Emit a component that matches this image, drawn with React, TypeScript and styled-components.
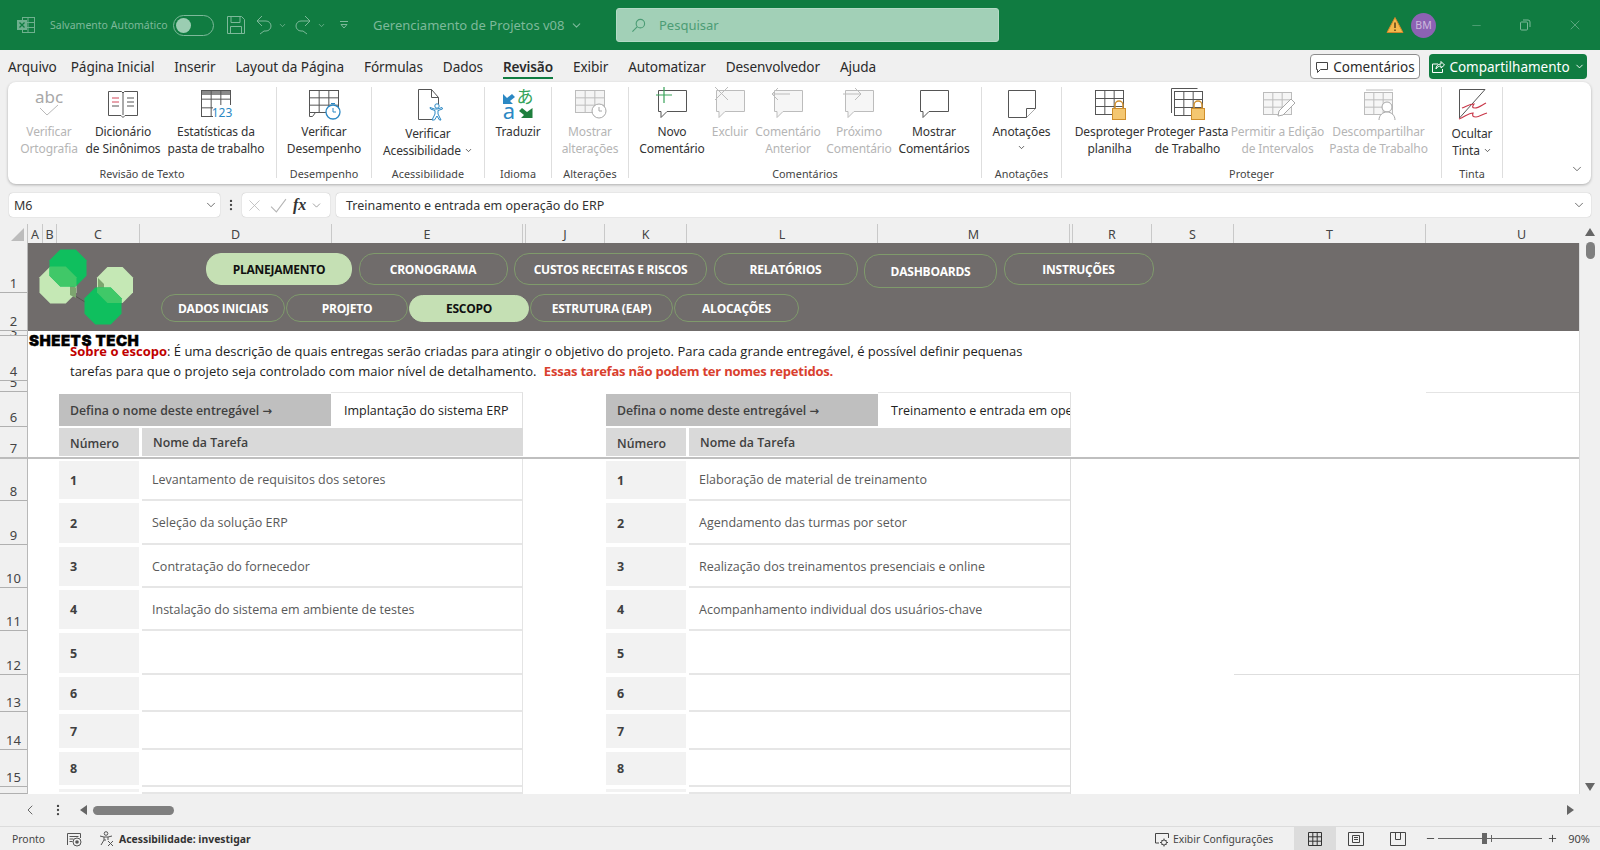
import React from "react";
import styled, { createGlobalStyle } from "styled-components";
import { ChevronDown, ChevronLeft, Minus, Plus, X, MoreVertical } from "lucide-react";

const UI = `"Noto Sans", "Open Sans", "Liberation Sans", sans-serif`;
const CELL = `"Open Sans", "Noto Sans", "Liberation Sans", sans-serif`;

const Global = createGlobalStyle`
  html, body { margin: 0; padding: 0; background: #f0f0f0; }
  * { box-sizing: border-box; }
`;

const GRAY = "#555555";
const OFF = "#bcbcbc";
const BLUE = "#2b88c4";

function Grid({ x, y, w, h, c, fill = "none" }: { x: number; y: number; w: number; h: number; c: string; fill?: string }) {
  return (
    <g fill="none" stroke={c} strokeWidth="1">
      <rect x={x + 0.5} y={y + 0.5} width={w} height={h} fill={fill} />
      <path d={`M${x + 0.5} ${y + h / 3 + 0.5}h${w}M${x + 0.5} ${y + (2 * h) / 3 + 0.5}h${w}M${x + w / 3 + 0.5} ${y + 0.5}v${h}M${x + (2 * w) / 3 + 0.5} ${y + 0.5}v${h}`} />
    </g>
  );
}

function Lock({ x, y }: { x: number; y: number }) {
  return (
    <g>
      <path d={`M${x + 3} ${y + 8}v-3a4 4 0 0 1 8 0v3`} fill="none" stroke="#d08f2c" strokeWidth="1.5" />
      <rect x={x + 0.5} y={y + 8.5} width={13} height={11} fill="#f4c771" stroke="#d08f2c" />
    </g>
  );
}

function Bubble({ c = GRAY, fill = "#fff" }: { c?: string; fill?: string }) {
  return <path d="M6.5 3.5h28v21H15l-6 6v-6H6.5z" fill={fill} stroke={c} />;
}

const RibbonIcons: Record<string, React.ReactNode> = {
  spell: (
    <>
      <text x="20" y="16" textAnchor="middle" fontFamily={UI} fontSize="17" fill="#a8a8a8">abc</text>
      <path d="M11 21l7 7 11-10" fill="none" stroke="#b9b9b9" />
    </>
  ),
  book: (
    <>
      <path d="M5.5 4.5h13l1.5 1.5 1.5-1.5h13v24H22l-2 2-2-2H5.500z" fill="#fff" stroke={GRAY} />
      <path d="M20 6v22" stroke={GRAY} />
      <path d="M9 11h7M9 15h7" stroke="#d2475b" />
      <path d="M9 19h7M24 11h7M24 15h7M24 19h7" stroke={GRAY} />
    </>
  ),
  stats: (
    <>
      <rect x="6" y="3" width="28" height="5" fill="#8a8a8a" />
      <Grid x={5} y={3} w={29} h={26} c={GRAY} />
      <rect x="17" y="18" width="20" height="13" fill="#fff" />
      <text x="26" y="30" textAnchor="middle" fontFamily={UI} fontSize="12" fill={BLUE}>123</text>
    </>
  ),
  perf: (
    <>
      <Grid x={5} y={3} w={29} h={22} c={GRAY} />
      <path d="M5.500 25.500h6l-3 4h-3z" fill="#fff" stroke={GRAY} />
      <circle cx="29" cy="25" r="7" fill="#fff" stroke={BLUE} strokeWidth="1.300" />
      <path d="M29 21v4h3M27 16.500h4" fill="none" stroke={BLUE} />
    </>
  ),
  access: (
    <>
      <path d="M10.500 32.500V2.500h13l7 8v8M24 32.500H10.500M23.500 2.500v8h7" fill="#fff" stroke={GRAY} />
      <circle cx="29" cy="19" r="2.200" fill="#fff" stroke={BLUE} />
      <path d="M22.500 22l4.500 1.500v3.500l-3 6h2.500l2.500-4 2.500 4H33l-3-6v-3.500l4.500-1.500-.5-1.500-4.500 1.500h-3l-4.500-1.500z" fill="#fff" stroke={BLUE} />
    </>
  ),
  translate: (
    <>
      <path d="M5 7v10h10l-3-3 5-4-3-3-5 4z" fill={BLUE} />
      <text x="11" y="32" textAnchor="middle" fontFamily={UI} fontSize="22" fill={BLUE}>a</text>
      <text x="27" y="16" textAnchor="middle" fontFamily={`"Noto Sans CJK JP", sans-serif`} fontSize="17" fill="#35a35a">あ</text>
      <path d="M34.500 31H23l3-3-5-4 3-3 5 4 5.500-4z" fill="#1f7f3d" />
    </>
  ),
  changes: (
    <>
      <Grid x={5} y={3} w={29} h={22} c={OFF} fill="#f4f4f4" />
      <circle cx="29" cy="24" r="7" fill="#fff" stroke="#a8a8a8" />
      <path d="M29 20v4h3" fill="none" stroke="#a8a8a8" />
    </>
  ),
  add: (
    <>
      <Bubble />
      <path d="M12 0v16M4 8h16" stroke="#3aa35a" strokeWidth="1.200" />
    </>
  ),
  del: (
    <>
      <Bubble c={OFF} fill="#f6f6f6" />
      <path d="M5 0l13 13M18 0L5 13" stroke={OFF} />
    </>
  ),
  prev: (
    <>
      <Bubble c={OFF} fill="#f6f6f6" />
      <path d="M22 7H4M10 1L4 7l6 6" fill="none" stroke={OFF} />
    </>
  ),
  next: (
    <>
      <Bubble c={OFF} fill="#f6f6f6" />
      <path d="M4 7h18M16 1l6 6-6 6" fill="none" stroke={OFF} />
    </>
  ),
  show: <Bubble />,
  note: (
    <>
      <path d="M6.500 3.500h27v18l-9 9h-18z" fill="#fff" stroke={GRAY} />
      <path d="M24.500 30.500v-9h9" fill="#fff" stroke={GRAY} />
    </>
  ),
  unprotect: (
    <>
      <Grid x={5} y={3} w={28} h={24} c={GRAY} />
      <Lock x={22} y={13} />
    </>
  ),
  protect: (
    <>
      <path d="M3.500 26V1.500h26" fill="none" stroke={GRAY} />
      <Grid x={6} y={4} w={28} h={24} c={GRAY} />
      <Lock x={23} y={13} />
    </>
  ),
  edit: (
    <>
      <Grid x={5} y={5} w={28} h={22} c={OFF} fill="#f6f6f6" />
      <path d="M20 29l1-5 12-12 4 4-12 12z" fill="#fff" stroke="#a8a8a8" />
    </>
  ),
  share: (
    <>
      <path d="M7 3h27" stroke={OFF} />
      <Grid x={5} y={5} w={28} h={22} c={OFF} fill="#f6f6f6" />
      <circle cx="28" cy="20" r="5" fill="#fff" stroke="#a8a8a8" />
      <path d="M20 33c0-5 4-8 8-8s8 3 8 8" fill="#fff" stroke="#a8a8a8" />
    </>
  ),
  ink: (
    <>
      <path d="M7.500 31V2.500H33L7.500 31z" fill="#fff" stroke={GRAY} />
      <path d="M10 21c5-2 8-4 12-4-2 3-2 4 1 4 3 0 7-3 11-5M7 32c6-2 9-6 14-6-1 3 0 4 3 4s7-3 11-4" fill="none" stroke="#c9384a" strokeWidth="1.200" />
    </>
  ),
};

type Btn = { w: number; text: string; icon: string; off?: boolean; menu?: boolean; low?: boolean };
type Group = { label: string; w: number; last?: boolean; items: Btn[] };

const GROUPS: Group[] = [
  {
    label: "Revisão de Texto",
    w: 269,
    items: [
      { w: 62, text: "Verificar\nOrtografia", icon: "spell", off: true },
      { w: 82, text: "Dicionário\nde Sinônimos", icon: "book" },
      { w: 100, text: "Estatísticas da\npasta de trabalho", icon: "stats" },
    ],
  },
  { label: "Desempenho", w: 95, items: [{ w: 80, text: "Verificar\nDesempenho", icon: "perf" }] },
  { label: "Acessibilidade", w: 113, items: [{ w: 100, text: "Verificar\nAcessibilidade", icon: "access", menu: true, low: true }] },
  { label: "Idioma", w: 67, items: [{ w: 50, text: "Traduzir", icon: "translate" }] },
  { label: "Alterações", w: 77, items: [{ w: 62, text: "Mostrar\nalterações", icon: "changes", off: true }] },
  {
    label: "Comentários",
    w: 353,
    items: [
      { w: 68, text: "Novo\nComentário", icon: "add" },
      { w: 44, text: "Excluir", icon: "del", off: true },
      { w: 68, text: "Comentário\nAnterior", icon: "prev", off: true },
      { w: 70, text: "Próximo\nComentário", icon: "next", off: true },
      { w: 76, text: "Mostrar\nComentários", icon: "show" },
    ],
  },
  { label: "Anotações", w: 80, items: [{ w: 70, text: "Anotações", icon: "note", menu: true }] },
  {
    label: "Proteger",
    w: 380,
    items: [
      { w: 72, text: "Desproteger\nplanilha", icon: "unprotect" },
      { w: 80, text: "Proteger Pasta\nde Trabalho", icon: "protect" },
      { w: 96, text: "Permitir a Edição\nde Intervalos", icon: "edit", off: true },
      { w: 102, text: "Descompartilhar\nPasta de Trabalho", icon: "share", off: true },
    ],
  },
  { label: "Tinta", w: 61, items: [{ w: 50, text: "Ocultar\nTinta", icon: "ink", menu: true, low: true }] },
];

const TABS = ["Arquivo", "Página Inicial", "Inserir", "Layout da Página", "Fórmulas", "Dados", "Revisão", "Exibir", "Automatizar", "Desenvolvedor", "Ajuda"];

const COLS: [string, number][] = [
  ["A", 15], ["B", 14], ["C", 83], ["D", 192], ["E", 191], ["", 3], ["J", 79], ["K", 82], ["L", 191], ["M", 192], ["", 3], ["R", 79], ["S", 82], ["T", 192], ["U", 192],
];

const ROW_HEADS: [number, number][] = [
  [1, 50], [2, 38], [3, 5], [4, 45], [5, 11], [6, 35], [7, 32], [8, 42], [9, 44], [10, 43], [11, 43], [12, 44], [13, 37], [14, 38], [15, 37], [16, 7],
];

const TASK_ROWS = ROW_HEADS.slice(7);

const LEFT = ["Levantamento de requisitos dos setores", "Seleção da solução ERP", "Contratação do fornecedor", "Instalação do sistema em ambiente de testes"];
const RIGHT = ["Elaboração de material de treinamento", "Agendamento das turmas por setor", "Realização dos treinamentos presenciais e online", "Acompanhamento individual dos usuários-chave"];

const NAV_TOP = [
  { t: "PLANEJAMENTO", w: 146, h: 32, on: true },
  { t: "CRONOGRAMA", w: 149, h: 32 },
  { t: "CUSTOS RECEITAS E RISCOS", w: 193, h: 32 },
  { t: "RELATÓRIOS", w: 144, h: 32 },
  { t: "DASHBOARDS", w: 133, h: 34, drop: true },
  { t: "INSTRUÇÕES", w: 150, h: 32 },
];
const NAV_SUB = [
  { t: "DADOS INICIAIS", w: 124, h: 28 },
  { t: "PROJETO", w: 122, h: 28 },
  { t: "ESCOPO", w: 120, h: 27, on: true },
  { t: "ESTRUTURA (EAP)", w: 143, h: 28 },
  { t: "ALOCAÇÕES", w: 125, h: 28 },
];

function Logo() {
  const oct = (cx: number, cy: number, r: number) => {
    const k = r * 0.42;
    return `${cx - k},${cy - r} ${cx + k},${cy - r} ${cx + r},${cy - k} ${cx + r},${cy + k} ${cx + k},${cy + r} ${cx - k},${cy + r} ${cx - r},${cy + k} ${cx - r},${cy - k}`;
  };
  const a = oct(30, 20, 18.500);
  const b = oct(20, 37, 18.500);
  const c = oct(77, 37, 18);
  const d = oct(65, 58, 18.500);
  return (
    <LogoMark viewBox="0 0 100 80" width="100" height="80">
      <defs>
        <clipPath id="clip-a"><polygon points={a} /></clipPath>
        <clipPath id="clip-d"><polygon points={d} /></clipPath>
      </defs>
      <path d="M34 46L60 62" stroke="#55524f" strokeWidth="1" />
      <polygon points={b} fill="#c5e8b5" />
      <polygon points={c} fill="#c5e8b5" />
      <polygon points="32,32 38,40 38,50 32,47" fill="#7da56f" />
      <polygon points="60,30 66,36 66,46 60,42" fill="#7da56f" />
      <polygon points={a} fill="#0fbf5e" />
      <polygon points={d} fill="#0fbf5e" />
      <polygon points={b} fill="#40c868" clipPath="url(#clip-a)" />
      <polygon points={c} fill="#40c868" clipPath="url(#clip-d)" />
    </LogoMark>
  );
}

function Nav({ items }: { items: { t: string; w: number; h: number; on?: boolean; drop?: boolean }[] }) {
  return (
    <>
      {items.map((p) => (
        <Pill key={p.t} $w={p.w} $h={p.h} $on={p.on} $drop={p.drop}>{p.t}</Pill>
      ))}
    </>
  );
}

function NameHeader({ value }: { value: string }) {
  return (
    <NameHead>
      <NameLabel>Defina o nome deste entregável <LabelArrow>→</LabelArrow></NameLabel>
      <NameValue>{value}</NameValue>
    </NameHead>
  );
}

function TaskHeader() {
  return (
    <TaskHead>
      <HeadNum>Número</HeadNum>
      <HeadName>Nome da Tarefa</HeadName>
    </TaskHead>
  );
}

export default function App() {
  return (
    <Page>
      <Global />
      <TitleBar>
        <ExcelMark viewBox="0 0 20 20" width="20" height="20">
          <rect x="6.500" y="2.500" width="12" height="15" fill="none" stroke="#6fb08e" />
          <path d="M12 2.500v15M6.500 7.500h12M6.500 12.500h12" stroke="#6fb08e" />
          <rect x="1" y="5" width="10" height="10" fill="#6fb08e" />
          <path d="M3.500 7.500l5 5M8.500 7.500l-5 5" stroke="#107c41" strokeWidth="1.300" />
        </ExcelMark>
        <AutoSave>Salvamento Automático</AutoSave>
        <Toggle><ToggleKnob /></Toggle>
        <QatIcon viewBox="0 0 20 20" width="20" height="20">
          <path d="M1.500 1.500h14l3 3v14h-17zM5 1.500v6h9v-6M4.500 18.500v-7h11v7" />
        </QatIcon>
        <QatIcon viewBox="0 0 20 20" width="20" height="20" $gap={8}>
          <path d="M8 1L3 6l5 5M3 6h9a5 5 0 0 1 0 10h-2l-4 3" />
        </QatIcon>
        <QatChevron size={9} />
        <QatIcon viewBox="0 0 20 20" width="20" height="20" $gap={6}>
          <path d="M12 1l5 5-5 5M17 6H8a5 5 0 0 0 0 10h2l4 3" />
        </QatIcon>
        <QatChevron size={9} />
        <QatIcon viewBox="0 0 10 10" width="10" height="10" $gap={13}>
          <path d="M1 1.500h8M2 4.500h6L5 8z" />
        </QatIcon>
        <DocTitle>Gerenciamento de Projetos v08 <ChevronDown size={13} /></DocTitle>
        <SearchBox>
          <svg viewBox="0 0 16 16" width="15" height="15" fill="none" stroke="#4c9c75" strokeWidth="1.200">
            <circle cx="10" cy="6" r="4.500" />
            <path d="M6.500 9.500L1.500 14.500" />
          </svg>
          <SearchHint>Pesquisar</SearchHint>
        </SearchBox>
        <WindowSide>
          <svg viewBox="0 0 18 18" width="18" height="18">
            <path d="M9 1.500l8 15H1z" fill="#f2b84b" stroke="#d1862a" />
            <path d="M9 6.500v5.500M9 13.500v1.500" stroke="#4d3a12" strokeWidth="1.400" />
          </svg>
          <Avatar>BM</Avatar>
          <WinBtn $gap={34}><Minus size={13} strokeWidth={1} /></WinBtn>
          <WinBtn $gap={36}>
            <svg viewBox="0 0 12 12" width="12" height="12" fill="none" stroke="currentColor">
              <rect x="1.500" y="3" width="7" height="8" rx="1" />
              <path d="M4 1h5a2 2 0 0 1 2 2v5" />
            </svg>
          </WinBtn>
          <WinBtn $gap={36}><X size={16} strokeWidth={1} /></WinBtn>
        </WindowSide>
      </TitleBar>

      <TabBar>
        {TABS.map((t) => (
          <Tab key={t} $on={t === "Revisão"} $tight={t === "Arquivo"}>{t}</Tab>
        ))}
        <TabActions>
          <CommentsBtn>
            <svg viewBox="0 0 14 14" width="14" height="14" fill="none" stroke="#444">
              <path d="M1.500 2.500h11v7h-7l-3 3v-3h-1z" />
            </svg>
            Comentários
          </CommentsBtn>
          <ShareBtn>
            <svg viewBox="0 0 14 14" width="14" height="14" fill="none" stroke="#fff">
              <path d="M7 4H1.500v8.500h10V9M5 9c0-3 2-5 5-5V1.500L13.500 5 10 8V6C8 6 6 7 5 9z" />
            </svg>
            Compartilhamento
            <ChevronDown size={11} />
          </ShareBtn>
        </TabActions>
      </TabBar>

      <Ribbon>
        {GROUPS.map((g) => (
          <RibbonGroup key={g.label} $w={g.w}>
            <GroupItems>
              {g.items.map((b) => (
                <RibbonBtn key={b.text} $w={b.w} $off={b.off}>
                  <IconSlot viewBox="0 0 40 34" width="40" height="34">{RibbonIcons[b.icon]}</IconSlot>
                  <BtnText $low={b.low}>
                    {b.text}
                    {b.menu && (b.icon === "note" ? <MenuBelow><ChevronDown size={9} /></MenuBelow> : <MenuInline size={9} />)}
                  </BtnText>
                </RibbonBtn>
              ))}
            </GroupItems>
            <GroupLabel>{g.label}</GroupLabel>
          </RibbonGroup>
        ))}
        <RibbonCollapse><ChevronDown size={14} strokeWidth={1.200} /></RibbonCollapse>
      </Ribbon>

      <FormulaBar>
        <NameBox>M6 <ChevronDown size={14} strokeWidth={1.200} /></NameBox>
        <BarDots><MoreVertical size={14} /></BarDots>
        <FuncBox>
          <X size={19} strokeWidth={1} />
          <svg viewBox="0 0 16 16" width="17" height="17" fill="none" stroke="#b5b5b5"><path d="M1 9l5 5 9-12" /></svg>
          <Fx>fx</Fx>
          <FuncChevron size={13} strokeWidth={1} />
        </FuncBox>
        <FormulaInput>
          Treinamento e entrada em operação do ERP
          <ChevronDown size={14} strokeWidth={1.200} />
        </FormulaInput>
      </FormulaBar>

      <SheetFrame>
        <SheetMain>
          <ColHeaders>
            <Corner><CornerMark /></Corner>
            {COLS.map(([c, w], i) => (
              <ColHead key={`${c}${i}`} $w={w}>{c}</ColHead>
            ))}
          </ColHeaders>
          <SheetBody>
            <RowHeaders>
              {ROW_HEADS.map(([n, h]) => (
                <RowHead key={n} $h={h} $freeze={n === 7} $tight={n === 3}>{n === 16 ? "" : n}</RowHead>
              ))}
            </RowHeaders>
            <Cells>
              <Banner>
                <Logo />
                <NavTop><Nav items={NAV_TOP} /></NavTop>
                <NavSub><Nav items={NAV_SUB} /></NavSub>
              </Banner>
              <BrandName>SHEETS TECH</BrandName>
              <About>
                <AboutLead>Sobre o escopo</AboutLead>: É uma descrição de quais entregas serão criadas para atingir o objetivo do projeto. Para cada grande entregável, é possível definir pequenas
                <br />
                tarefas para que o projeto seja controlado com maior nível de detalhamento. <AboutWarn>Essas tarefas não podem ter nomes repetidos.</AboutWarn>
              </About>

              <SheetRow $h={35}>
                <span />
                <NameHeader value="Implantação do sistema ERP" />
                <span />
                <NameHeader value="Treinamento e entrada em operação do ERP" />
                <Filler><FillerRule $w={153} $top /></Filler>
              </SheetRow>
              <SheetRow $h={32} $freeze>
                <span />
                <TaskHeader />
                <span />
                <TaskHeader />
                <span />
              </SheetRow>
              {TASK_ROWS.map(([n, h], i) => (
                <SheetRow key={n} $h={h}>
                  <span />
                  <TaskRow>
                    <NumCell>{n === 16 ? "" : i + 1}</NumCell>
                    <NameCell>{LEFT[i]}</NameCell>
                  </TaskRow>
                  <span />
                  <TaskRow $edge>
                    <NumCell>{n === 16 ? "" : i + 1}</NumCell>
                    <NameCell>{RIGHT[i]}</NameCell>
                  </TaskRow>
                  <Filler>{n === 12 && <FillerRule $w={345} />}</Filler>
                </SheetRow>
              ))}
            </Cells>
          </SheetBody>
        </SheetMain>
        <VScroll>
          <ArrowUp />
          <VThumb />
          <ArrowDown />
        </VScroll>
      </SheetFrame>

      <HScroll>
        <ChevronLeft size={16} strokeWidth={1.200} color="#444" />
        <HDots><MoreVertical size={14} color="#444" /></HDots>
        <ArrowLeft />
        <HThumb />
        <ArrowRight />
      </HScroll>

      <StatusBar>
        <StatusText>Pronto</StatusText>
        <StatusIcon viewBox="0 0 16 16" width="16" height="16" $gap={22}>
          <path d="M1.500 14V2.500h13V7M3.500 5.500h9M3.500 8h4M3.500 10.500h3" fill="none" stroke="#555" />
          <circle cx="11" cy="11" r="4" fill="none" stroke="#555" />
          <circle cx="11" cy="11" r="1.800" fill="#555" />
        </StatusIcon>
        <StatusIcon viewBox="0 0 16 16" width="16" height="16" $gap={17}>
          <circle cx="7" cy="2.500" r="1.800" fill="none" stroke="#555" />
          <path d="M1 5l4 1h4l4-1M5 6v3l-3 5M9 6v3M5 9h2" fill="none" stroke="#555" />
          <path d="M9 10l5 5M14 10l-5 5" stroke="#555" />
        </StatusIcon>
        <StatusStrong>Acessibilidade: investigar</StatusStrong>
        <StatusRight>
          <DisplayCfg>
            <svg viewBox="0 0 16 16" width="16" height="16" fill="none" stroke="#444">
              <path d="M5 12H1.500V2.500h13V7" />
              <circle cx="10" cy="11.500" r="2.500" />
              <path d="M10 7.500v1.500M10 14v1.500M6 11.500h1.500M12.500 11.500H14M7.500 9l1 1M11.500 13l1 1M12.500 9l-1 1M8.500 13l-1 1" />
            </svg>
            Exibir Configurações
          </DisplayCfg>
          <ViewBtn $w={42} $on>
            <svg viewBox="0 0 14 14" width="14" height="14" fill="none" stroke="#333">
              <path d="M.5.500h13v13H.5zM.5 4.800h13M.5 9.200h13M4.800.500v13M9.200.500v13" />
            </svg>
          </ViewBtn>
          <ViewBtn $w={40}>
            <svg viewBox="0 0 16 14" width="16" height="14" fill="none" stroke="#444">
              <path d="M.5.500h15v13H.5zM4.500 3.500h7v7h-7zM6 5.500h4M6 7.500h4" />
            </svg>
          </ViewBtn>
          <ViewBtn $w={44}>
            <svg viewBox="0 0 16 14" width="16" height="14" fill="none" stroke="#444">
              <path d="M.5.500h15v13H.5zM5.500.500v7h5v-7" />
            </svg>
          </ViewBtn>
          <ZoomMinus size={11} color="#444" />
          <ZoomTrack><ZoomThumb /><ZoomTick /></ZoomTrack>
          <Plus size={11} color="#444" />
          <ZoomValue>90%</ZoomValue>
        </StatusRight>
      </StatusBar>
    </Page>
  );
}

const Page = styled.div`
  width: 1600px;
  height: 850px;
  overflow: hidden;
  display: flex;
  flex-direction: column;
  background: #f0f0f0;
  font-family: ${UI};
  color: #333;
`;

const TitleBar = styled.div`
  height: 50px;
  flex: none;
  background: #107c41;
  display: flex;
  align-items: center;
  padding-left: 16px;
  color: #7db99a;
`;

const ExcelMark = styled.svg`
  flex: none;
`;

const AutoSave = styled.span`
  margin-left: 14px;
  width: 123px;
  font-size: 10.500px;
  white-space: nowrap;
  color: #7db99a;
`;

const Toggle = styled.div`
  width: 41px;
  height: 21px;
  border: 1px solid #7db99a;
  border-radius: 11px;
  padding: 2px;
`;

const ToggleKnob = styled.div`
  width: 15px;
  height: 15px;
  border-radius: 50%;
  background: #9bcdb2;
`;

const QatIcon = styled.svg<{ $gap?: number }>`
  flex: none;
  margin-left: ${(p) => p.$gap ?? 12}px;
  fill: none;
  stroke: #7db99a;
  stroke-width: 1;
`;

const QatChevron = styled(ChevronDown)`
  margin-left: 4px;
  flex: none;
`;

const DocTitle = styled.div`
  margin-left: 24px;
  width: 243px;
  font-size: 13px;
  white-space: nowrap;
  display: flex;
  align-items: center;
  gap: 5px;
`;

const SearchBox = styled.div`
  width: 383px;
  height: 34px;
  background: #a2d0b7;
  border-radius: 3px;
  border: 1px solid #b4dac5;
  display: flex;
  align-items: center;
  padding-left: 14px;
  gap: 13px;
`;

const SearchHint = styled.span`
  font-size: 13px;
  color: #4c9c75;
`;

const WindowSide = styled.div`
  margin-left: auto;
  display: flex;
  align-items: center;
  padding-right: 17px;
`;

const Avatar = styled.div`
  width: 25px;
  height: 25px;
  margin-left: 7px;
  border-radius: 50%;
  background: #8c62b3;
  color: #cdb9de;
  font-size: 10.500px;
  display: flex;
  align-items: center;
  justify-content: center;
`;

const WinBtn = styled.div<{ $gap: number }>`
  margin-left: ${(p) => p.$gap}px;
  display: flex;
  color: #7db99a;
`;

const TabBar = styled.div`
  height: 32px;
  flex: none;
  display: flex;
  align-items: center;
  gap: 20px;
  padding: 1px 0 0 8px;
`;

const Tab = styled.div<{ $on?: boolean; $tight?: boolean }>`
  position: relative;
  margin-right: ${(p) => (p.$tight ? -6 : 0)}px;
  font-size: 13.600px;
  line-height: 24px;
  letter-spacing: -0.1px;
  white-space: nowrap;
  color: #2b2b2b;
  font-weight: ${(p) => (p.$on ? 600 : 400)};
  ${(p) =>
    p.$on &&
    `&::after { content: ""; position: absolute; left: 0; right: 0; bottom: 0; height: 2px; background: #107c41; }`}
`;

const TabActions = styled.div`
  margin-left: auto;
  display: flex;
  gap: 9px;
  padding-right: 13px;
`;

const CommentsBtn = styled.div`
  width: 110px;
  height: 25px;
  border: 1px solid #8d8d8d;
  border-radius: 4px;
  background: #fff;
  display: flex;
  align-items: center;
  justify-content: center;
  gap: 4px;
  font-size: 13.500px;
  color: #2b2b2b;
`;

const ShareBtn = styled.div`
  width: 158px;
  height: 25px;
  border-radius: 4px;
  background: #107c41;
  color: #fff;
  display: flex;
  align-items: center;
  justify-content: center;
  gap: 4px;
  font-size: 13.500px;
`;

const Ribbon = styled.div`
  position: relative;
  height: 102px;
  flex: none;
  margin: 0 9px 0 8px;
  padding: 5px 0 6px;
  background: #fff;
  border-radius: 8px;
  box-shadow: 0 1px 3px rgba(0, 0, 0, 0.28);
  display: flex;
`;

const RibbonGroup = styled.div<{ $w: number }>`
  width: ${(p) => p.$w}px;
  flex: none;
  display: flex;
  flex-direction: column;
  border-right: 1px solid #dedede;
`;

const GroupItems = styled.div`
  flex: 1;
  display: flex;
  justify-content: center;
  gap: 2px;
`;

const RibbonBtn = styled.div<{ $w: number; $off?: boolean }>`
  width: ${(p) => p.$w}px;
  flex: none;
  display: flex;
  flex-direction: column;
  align-items: center;
  color: ${(p) => (p.$off ? "#b5b5b5" : "#333")};
`;

const IconSlot = styled.svg`
  flex: none;
  overflow: visible;
`;

const BtnText = styled.div<{ $low?: boolean }>`
  margin-top: ${(p) => (p.$low ? 4 : 2)}px;
  font-size: 12px;
  line-height: 17px;
  letter-spacing: -0.12px;
  text-align: center;
  white-space: pre;
`;

const MenuInline = styled(ChevronDown)`
  margin-left: 3px;
  vertical-align: 0;
`;

const MenuBelow = styled.div`
  display: flex;
  justify-content: center;
  padding-top: 3px;
`;

const GroupLabel = styled.div`
  height: 12px;
  margin-bottom: -2px;
  font-size: 10.800px;
  line-height: 12px;
  letter-spacing: 0.05px;
  text-align: center;
  color: #444;
`;

const RibbonCollapse = styled.div`
  position: absolute;
  right: 7px;
  bottom: 8px;
  display: flex;
  color: #333;
`;

const FormulaBar = styled.div`
  height: 24px;
  flex: none;
  margin: 9px 9px 7px 9px;
  display: flex;
  align-items: stretch;
`;

const BarBox = styled.div`
  background: #fff;
  border-radius: 4px;
  box-shadow: 0 0 1px rgba(0, 0, 0, 0.35);
  display: flex;
  align-items: center;
  font-size: 12.500px;
  color: #333;
`;

const NameBox = styled(BarBox)`
  width: 211px;
  padding: 0 2px 0 5px;
  justify-content: space-between;
`;

const BarDots = styled.div`
  width: 22px;
  display: flex;
  align-items: center;
  justify-content: center;
  color: #444;
`;

const FuncBox = styled(BarBox)`
  width: 88px;
  margin-right: 6px;
  padding: 0 3px;
  gap: 6px;
  color: #b5b5b5;
`;

const FuncChevron = styled(ChevronDown)`
  color: #555;
  margin-left: -2px;
  flex: none;
`;

const Fx = styled.span`
  font-family: "Liberation Serif", serif;
  font-style: italic;
  font-weight: 700;
  font-size: 16px;
  color: #333;
`;

const FormulaInput = styled(BarBox)`
  flex: 1;
  padding: 0 5px 0 10px;
  justify-content: space-between;
  color: #333;
`;

const SheetFrame = styled.div`
  height: 570px;
  flex: none;
  display: flex;
`;

const SheetMain = styled.div`
  flex: 1;
  min-width: 0;
  display: flex;
  flex-direction: column;
`;

const ColHeaders = styled.div`
  height: 19px;
  flex: none;
  display: flex;
  overflow: hidden;
`;

const Corner = styled.div`
  position: relative;
  width: 28px;
  flex: none;
  border-right: 1px solid #c4c4c4;
`;

const CornerMark = styled.div`
  position: absolute;
  right: 3px;
  bottom: 2px;
  width: 0;
  height: 0;
  border-left: 13px solid transparent;
  border-bottom: 13px solid #bcbcbc;
`;

const ColHead = styled.div<{ $w: number }>`
  width: ${(p) => p.$w}px;
  flex: none;
  border-right: 1px solid #c9c9c9;
  font-size: 12.500px;
  line-height: 21px;
  text-align: center;
  color: #444;
`;

const SheetBody = styled.div`
  flex: 1;
  min-height: 0;
  display: flex;
`;

const RowHeaders = styled.div`
  width: 28px;
  flex: none;
  overflow: hidden;
  border-right: 1px solid #b8b8b8;
`;

const RowHead = styled.div<{ $h: number; $freeze?: boolean; $tight?: boolean }>`
  height: ${(p) => p.$h}px;
  display: flex;
  align-items: flex-end;
  justify-content: center;
  overflow: hidden;
  border-bottom: ${(p) => (p.$freeze ? "2px solid #bcbcbc" : "1px solid #b0b0b0")};
  font-size: 13px;
  line-height: ${(p) => (p.$tight ? 8 : 17)}px;
  color: #444;
`;

const Cells = styled.div`
  position: relative;
  flex: 1;
  min-width: 0;
  overflow: hidden;
  background: #fff;
  border-right: 1px solid #dcdcdc;
  font-family: ${CELL};
`;

const Banner = styled.div`
  position: relative;
  height: 88px;
  background: #706c6b;
  padding-top: 10px;
  display: flex;
  flex-direction: column;
`;

const LogoMark = styled.svg`
  position: absolute;
  left: 10px;
  top: 5px;
`;

const NavTop = styled.div`
  height: 41px;
  padding-left: 178px;
  display: flex;
  align-items: flex-start;
  gap: 6.500px;
`;

const NavSub = styled.div`
  padding-left: 133px;
  display: flex;
  align-items: center;
  gap: 1px;
`;

const Pill = styled.div<{ $w: number; $h: number; $on?: boolean; $drop?: boolean }>`
  width: ${(p) => p.$w}px;
  height: ${(p) => p.$h}px;
  flex: none;
  margin-top: ${(p) => (p.$drop ? 1 : 0)}px;
  border: 1px solid ${(p) => (p.$on ? "#c5e0b4" : "#7f9a6b")};
  border-radius: 15px;
  background: ${(p) => (p.$on ? "#c5e0b4" : "transparent")};
  color: ${(p) => (p.$on ? "#111" : "#fff")};
  display: flex;
  align-items: center;
  justify-content: center;
  font-size: 12px;
  font-weight: 700;
  letter-spacing: -0.25px;
  white-space: nowrap;
`;

const BrandName = styled.div`
  position: absolute;
  left: 1px;
  top: 89px;
  z-index: 2;
  font-family: Inter, "Liberation Sans", sans-serif;
  font-weight: 900;
  font-size: 15px;
  line-height: 17px;
  letter-spacing: 0.5px;
  -webkit-text-stroke: 0.4px #000;
  color: #000;
  white-space: nowrap;
`;

const About = styled.div`
  height: 61px;
  padding: 10px 0 0 42px;
  font-size: 13px;
  line-height: 20px;
  color: #222;
  white-space: nowrap;
`;

const AboutLead = styled.b`
  color: #c00000;
`;

const AboutWarn = styled.b`
  margin-left: 4px;
  letter-spacing: -0.22px;
  color: #d9402e;
`;

const SheetRow = styled.div<{ $h: number; $freeze?: boolean }>`
  height: ${(p) => p.$h}px;
  display: grid;
  grid-template-columns: 31px 464px 83px 465px 1fr;
  ${(p) => p.$freeze && "border-bottom: 2px solid #bfbfbf;"}
`;

const NameHead = styled.div`
  display: flex;
  min-width: 0;
`;

const NameLabel = styled.div`
  width: 272px;
  flex: none;
  height: 32px;
  margin-top: 2px;
  padding-left: 11px;
  background: #bfbfbf;
  color: #404040;
  font-size: 12.300px;
  font-weight: 600;
  line-height: 34px;
  white-space: nowrap;
`;

const LabelArrow = styled.span`
  font-family: "DejaVu Sans", sans-serif;
  font-size: 11.500px;
`;

const NameValue = styled.div`
  flex: 1;
  min-width: 0;
  overflow: hidden;
  padding-left: 13px;
  border-top: 1px solid #e6e6e6;
  border-right: 1px solid #e0e0e0;
  color: #222;
  font-size: 12.500px;
  line-height: 36px;
  white-space: nowrap;
`;

const Filler = styled.div`
  display: flex;
  justify-content: flex-end;
  min-width: 0;
`;

const FillerRule = styled.div<{ $w: number; $top?: boolean }>`
  width: ${(p) => p.$w}px;
  ${(p) => (p.$top ? "border-top: 1px solid #e4e4e4;" : "border-bottom: 1px solid #dedede;")}
`;

const TaskHead = styled.div`
  display: flex;
  gap: 3px;
  height: 28px;
  margin-top: 1px;
`;

const HeadNum = styled.div`
  width: 80px;
  flex: none;
  padding-left: 11px;
  background: #d9d9d9;
  color: #404040;
  font-size: 12.300px;
  font-weight: 600;
  line-height: 32px;
`;

const HeadName = styled.div`
  flex: 1;
  padding-left: 11px;
  background: #d9d9d9;
  color: #404040;
  font-size: 12.300px;
  font-weight: 600;
  line-height: 30px;
`;

const TaskRow = styled.div<{ $edge?: boolean }>`
  display: flex;
  gap: 3px;
  min-height: 0;
  border-right: 1px solid ${(p) => (p.$edge ? "#dcdcdc" : "#e4e4e4")};
`;

const NumCell = styled.div`
  width: 80px;
  flex: none;
  margin: 2px 0;
  padding-left: 11px;
  background: #f2f2f2;
  color: #404040;
  font-size: 12.500px;
  font-weight: 700;
  display: flex;
  align-items: center;
`;

const NameCell = styled.div`
  flex: 1;
  padding: 1px 0 0 10px;
  border-bottom: 2px solid #e6e6e6;
  color: #595959;
  font-size: 12.500px;
  display: flex;
  align-items: center;
  white-space: nowrap;
`;

const VScroll = styled.div`
  position: relative;
  width: 20px;
  flex: none;
  display: flex;
  flex-direction: column;
  align-items: center;
  padding: 4px 0 3px;
`;

const ArrowUp = styled.div`
  width: 0;
  height: 0;
  border-left: 5px solid transparent;
  border-right: 5px solid transparent;
  border-bottom: 8px solid #666;
`;

const ArrowDown = styled.div`
  margin-top: auto;
  width: 0;
  height: 0;
  border-left: 5px solid transparent;
  border-right: 5px solid transparent;
  border-top: 8px solid #666;
`;

const VThumb = styled.div`
  width: 9px;
  height: 17px;
  margin-top: 6px;
  border-radius: 5px;
  background: #7f7f7f;
`;

const HScroll = styled.div`
  height: 33px;
  flex: none;
  display: flex;
  align-items: center;
  padding: 0 26px 0 22px;
  border-bottom: 1px solid #dcdcdc;
`;

const HDots = styled.div`
  display: flex;
  margin-left: 13px;
`;

const ArrowLeft = styled.div`
  width: 0;
  height: 0;
  margin-left: 15px;
  border-top: 5px solid transparent;
  border-bottom: 5px solid transparent;
  border-right: 7px solid #666;
`;

const HThumb = styled.div`
  width: 81px;
  height: 9px;
  margin-left: 6px;
  border-radius: 5px;
  background: #7f7f7f;
`;

const ArrowRight = styled.div`
  width: 0;
  height: 0;
  margin-left: auto;
  border-top: 5px solid transparent;
  border-bottom: 5px solid transparent;
  border-left: 7px solid #666;
`;

const StatusBar = styled.div`
  flex: 1;
  display: flex;
  align-items: center;
  padding-left: 12px;
  font-size: 10.400px;
  color: #444;
`;

const StatusText = styled.span`
  width: 32px;
  white-space: nowrap;
`;

const StatusIcon = styled.svg<{ $gap: number }>`
  flex: none;
  margin-left: ${(p) => p.$gap}px;
`;

const StatusStrong = styled.b`
  margin-left: 4px;
  white-space: nowrap;
  color: #333;
`;

const StatusRight = styled.div`
  margin-left: auto;
  height: 100%;
  display: flex;
  align-items: center;
  padding-right: 10px;
`;

const DisplayCfg = styled.div`
  display: flex;
  align-items: center;
  gap: 3px;
  margin-right: 21px;
  white-space: nowrap;
`;

const ViewBtn = styled.div<{ $w: number; $on?: boolean }>`
  width: ${(p) => p.$w}px;
  height: 100%;
  display: flex;
  align-items: center;
  justify-content: center;
  background: ${(p) => (p.$on ? "#dcdcdc" : "transparent")};
`;

const ZoomMinus = styled(Minus)`
  margin-left: 5px;
  flex: none;
`;

const ZoomTrack = styled.div`
  position: relative;
  width: 104px;
  height: 1px;
  margin: 0 5px 0 2px;
  background: #666;
`;

const ZoomThumb = styled.div`
  position: absolute;
  left: 44px;
  top: -5px;
  width: 5px;
  height: 11px;
  background: #666;
`;

const ZoomTick = styled.div`
  position: absolute;
  left: 53px;
  top: -3px;
  width: 1px;
  height: 7px;
  background: #666;
`;

const ZoomValue = styled.span`
  margin-left: 10px;
  font-size: 11px;
`;
